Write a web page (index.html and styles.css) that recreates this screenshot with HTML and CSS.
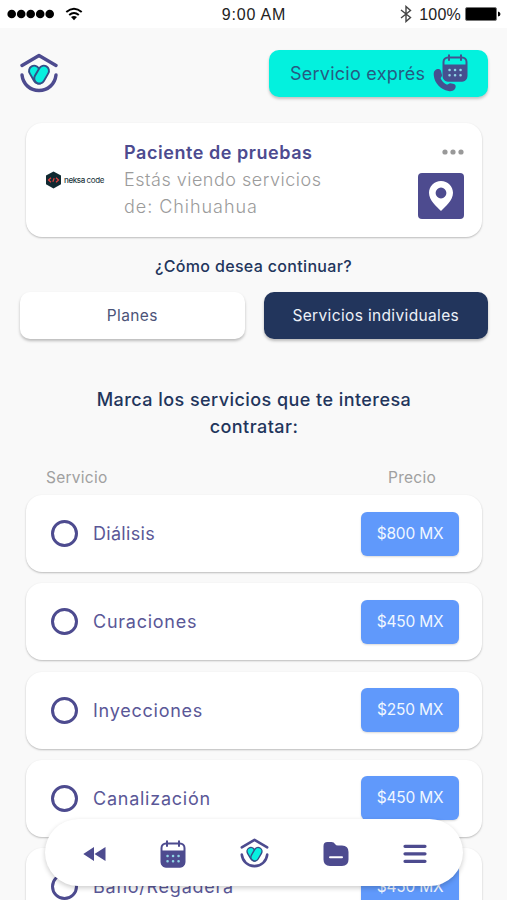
FILE: index.html
```html
<!DOCTYPE html>
<html lang="es">
<head>
    <meta charset="UTF-8">
    <meta name="viewport" content="width=device-width, initial-scale=1.0">
    <title>Servicios individuales</title>
    <link rel="stylesheet" href="styles.css">
</head>
<body>
    <!-- Iconos reutilizables -->
    <svg class="sprite" width="0" height="0">
        <symbol id="logo" viewBox="0 0 38 40">
            <path d="M2 12.5 L19 2.5 L36 12.5" fill="none" stroke="#4d4b8f" stroke-width="3.4" stroke-linecap="round" stroke-linejoin="round"/>
            <path d="M2 22 C3 31 10 37.5 19 37.5 S35 31 36 22" fill="none" stroke="#4d4b8f" stroke-width="3.4" stroke-linecap="round"/>
            <!-- Corazón formado por dos cápsulas -->
            <g fill="none" stroke-linecap="round">
                <path d="M14.2 17.8 L18.6 25.4" stroke="#354f87" stroke-width="12.2"/>
                <path d="M14.2 17.8 L18.6 25.4" stroke="#08efdf" stroke-width="8.4"/>
                <path d="M23.8 17.8 L19.4 25.4" stroke="#354f87" stroke-width="12.2"/>
                <path d="M23.8 17.8 L19.4 25.4" stroke="#08efdf" stroke-width="8.4"/>
            </g>
        </symbol>
        <symbol id="calendar" viewBox="0 0 26 28">
            <path d="M7 1.2 V6 M19 1.2 V6" stroke="currentColor" stroke-width="2" stroke-linecap="round"/>
            <rect x="1.5" y="3.5" width="23" height="23" rx="4.5" fill="none" stroke="currentColor" stroke-width="2"/>
            <path d="M1 10.5 H25 V22 A5 5 0 0 1 20 27.4 H6 A5 5 0 0 1 1 22 Z" fill="currentColor"/>
            <path class="calendar-days" d="M7.5 16 h.1 M13 16 h.1 M18.5 16 h.1 M7.5 21.2 h.1 M13 21.2 h.1 M18.5 21.2 h.1" stroke-width="2.5" stroke-linecap="round"/>
        </symbol>
    </svg>

    <div class="status-bar">
        <div class="status-left">
            <svg width="48" height="10" viewBox="0 0 48 10"><circle cx="4.7" cy="5" r="4.3"/><circle cx="14.2" cy="5" r="4.3"/><circle cx="23.7" cy="5" r="4.3"/><circle cx="33.2" cy="5" r="4.3"/><circle cx="42.7" cy="5" r="4.3"/></svg>
            <svg width="18" height="14" viewBox="0 0 18 14" fill="none" stroke="#000" stroke-width="2">
                <path d="M1.3 5 Q9 -1.6 16.7 5"/>
                <path d="M4.2 8 Q9 4 13.8 8"/>
                <path d="M6 10 Q9 7.9 12 10 L9 13.2 Z" fill="#000" stroke="none"/>
            </svg>
        </div>
        <span class="status-time">9:00 AM</span>
        <div class="status-right">
            <svg width="12" height="18" viewBox="0 0 12 18" fill="none" stroke="#444" stroke-width="1.4"><path d="M1 5 L10.5 12.5 L6 16.5 V1.5 L10.5 5.5 L1 13"/></svg>
            <span class="battery-text">100%</span>
            <svg width="36" height="14" viewBox="0 0 36 14"><rect x=".5" y=".5" width="31" height="13" rx="1.5" fill="#000" stroke="#777"/><path d="M33 4.5 Q35.5 5 35.5 7 T33 9.5 Z"/></svg>
        </div>
    </div>

    <header class="header">
        <svg class="header-logo"><use href="#logo"/></svg>
        <button class="express-btn">
            <span class="express-text">Servicio exprés</span>
            <svg class="express-icon" viewBox="0 0 35 38">
                <path d="M2 16.5 C4 14.5 7 14.5 8 17 L9 21 C9.2 23 7.2 23.4 8 25 C9.2 27.5 11.2 29.6 13.5 30.5 C15 31 15.6 29 17.5 29.2 L21 30 C23.4 31 23 34 21.5 35.5 C20 37 18 37.5 15.5 37 C7.5 35.5 1.5 29 .8 21.5 C.6 19 .8 17.5 2 16.5 Z" fill="#46508f"/>
                <svg x="9" y="0" width="26" height="28"><use href="#calendar"/></svg>
            </svg>
        </button>
    </header>

    <section class="patient-card">
        <div class="brand">
            <svg width="17" height="18" viewBox="0 0 17 18"><path d="M8.5 .5 L16 4.6 V13.2 L8.5 17.5 L1 13.2 V4.6 Z" fill="#102931"/><path d="M6 6.8 L3.5 9 L6 11.2 M11 6.8 L13.5 9 L11 11.2 M9.2 7.2 L7.8 10.8" fill="none" stroke="#e2403f" stroke-width="1.2"/></svg>
            <span class="brand-name">neksa <span class="brand-light">code</span></span>
        </div>
        <div class="patient-info">
            <div class="patient-name">Paciente de pruebas</div>
            <div class="patient-line">Estás viendo servicios</div>
            <div class="patient-line patient-city">de: Chihuahua</div>
        </div>
        <div class="patient-actions">
            <svg width="22" height="6" viewBox="0 0 22 6" fill="#999"><circle cx="3" cy="3" r="2.6"/><circle cx="11" cy="3" r="2.6"/><circle cx="19" cy="3" r="2.6"/></svg>
            <button class="location-btn">
                <svg width="26" height="32" viewBox="0 0 26 32"><path fill="#fff" fill-rule="evenodd" d="M13 1 C6.2 1 1 6.2 1 12.8 C1 20.5 8.5 26.5 13 31 C17.5 26.5 25 20.5 25 12.8 C25 6.2 19.8 1 13 1 Z M13 7.6 A5.4 5.4 0 1 1 13 18.4 A5.4 5.4 0 0 1 13 7.6 Z"/></svg>
            </button>
        </div>
    </section>

    <h2 class="question">¿Cómo desea continuar?</h2>
    <div class="tabs">
        <button class="tab">Planes</button>
        <button class="tab tab-active">Servicios individuales</button>
    </div>

    <h1 class="title">Marca los servicios que te interesa<br>contratar:</h1>

    <div class="list-header">
        <span>Servicio</span>
        <span>Precio</span>
    </div>
    <ul class="services">
        <li class="service"><span class="radio"></span><span class="service-name name-tight">Diálisis</span><span class="price">$800 MX</span></li>
        <li class="service"><span class="radio"></span><span class="service-name">Curaciones</span><span class="price">$450 MX</span></li>
        <li class="service"><span class="radio"></span><span class="service-name">Inyecciones</span><span class="price">$250 MX</span></li>
        <li class="service"><span class="radio"></span><span class="service-name">Canalización</span><span class="price">$450 MX</span></li>
        <li class="service"><span class="radio"></span><span class="service-name">Baño/Regadera</span><span class="price">$450 MX</span></li>
    </ul>

    <nav class="navbar">
        <svg width="23" height="16" viewBox="0 0 23 16" fill="currentColor"><path d="M.3 8 L11 1 V15 Z M11.5 8 L22.5 1 V15 Z"/></svg>
        <svg width="26" height="28"><use href="#calendar"/></svg>
        <svg class="nav-home" width="29" height="30"><use href="#logo"/></svg>
        <svg width="26" height="26" viewBox="0 0 26 26"><path d="M.5 5 Q.5 1 4.5 1 H8.5 Q11 1 12 3 Q13 4.5 15 4.5 H19 Q25.5 4.5 25.5 11 V18.5 Q25.5 25 19 25 H7 Q.5 25 .5 18.5 Z" fill="currentColor"/><path d="M7 16.2 H19" stroke="#fff" stroke-width="2" stroke-linecap="round"/></svg>
        <svg width="24" height="20" viewBox="0 0 24 20"><path d="M2 2.3 H22 M2 9.8 H22 M2 17.3 H22" stroke="currentColor" stroke-width="3.2" stroke-linecap="round"/></svg>
    </nav>
</body>
</html>
```
FILE: styles.css
```css
* {
    box-sizing: border-box;
}

body {
    margin: 0;
    height: 100vh;
    overflow: hidden;
    background-color: #f9f9f9;
    color: #22355c;
    font-family: Inter, "Open Sans", sans-serif;
}

button {
    border: none;
    padding: 0;
    font-family: inherit;
    cursor: pointer;
}

.sprite {
    position: absolute;
}

/* Barra de estado */
.status-bar {
    display: grid;
    grid-template-columns: 1fr auto 1fr;
    align-items: center;
    height: 28px;
    padding: 0 6px 0 7px;
    background-color: #fff;
    color: #222;
    font-family: "Liberation Sans", Arial, sans-serif;
    font-size: 16px;
}

.status-left,
.status-right {
    display: flex;
    align-items: center;
}

.status-left {
    gap: 10px;
}

.status-right {
    justify-content: flex-end;
}

.status-time {
    padding-top: 1px;
    letter-spacing: 0.8px;
}

.battery-text {
    margin: 1px 4px 0 7px;
    letter-spacing: 0.2px;
}

/* Encabezado */
.header {
    display: flex;
    justify-content: space-between;
    padding: 22px 19px 0 20px;
}

.header-logo {
    width: 38px;
    height: 40px;
    margin-top: 3px;
}

.express-btn {
    display: flex;
    align-items: center;
    width: 219px;
    height: 47px;
    padding-left: 21px;
    border-radius: 10px;
    background-color: #03f1de;
    color: #265b83;
    box-shadow: 0 2px 3px rgba(0, 0, 0, 0.22);
}

.express-text {
    width: 143px;
    text-align: left;
    font-size: 18px;
    letter-spacing: 0.25px;
    white-space: nowrap;
}

.express-icon {
    width: 35px;
    height: 38px;
    margin-top: -1px;
    color: #46508f;
}

.calendar-days {
    stroke: #8fd5e5;
}

/* Tarjeta del paciente */
.patient-card {
    display: flex;
    height: 114px;
    margin: 25.5px 25px 0 26px;
    padding: 16.5px 18px 0 19px;
    border-radius: 16px;
    background-color: #fff;
    box-shadow: 0 1px 2px rgba(0, 0, 0, 0.25);
}

.brand {
    display: flex;
    align-items: center;
    gap: 2px;
    width: 79px;
    height: 81px;
}

.brand-name {
    color: #20343b;
    font-size: 8px;
    font-weight: 500;
    letter-spacing: -0.4px;
    white-space: nowrap;
}

.brand-light {
    font-weight: 400;
}

.patient-info {
    flex: 1;
    font-size: 18px;
    line-height: 27px;
    white-space: nowrap;
}

.patient-name {
    color: #4d4b8f;
    font-weight: 600;
    letter-spacing: 0.55px;
}

.patient-line {
    color: #9b9b9b;
    font-weight: 300;
    letter-spacing: 0.5px;
}

.patient-city {
    letter-spacing: 0.95px;
}

.patient-actions {
    display: flex;
    flex-direction: column;
    align-items: flex-end;
    padding-top: 9.5px;
}

.location-btn {
    display: flex;
    align-items: center;
    justify-content: center;
    width: 46px;
    height: 46px;
    margin-top: 18px;
    border-radius: 4px;
    background-color: #4d4b8f;
}

/* Selector */
.question {
    margin: 17.5px 0 14px;
    font-size: 16px;
    font-weight: 500;
    line-height: 24px;
    letter-spacing: 0.33px;
    text-align: center;
}

.tabs {
    display: grid;
    grid-template-columns: 1fr 1fr;
    gap: 19px;
    padding: 0 19px 0 20px;
}

.tab {
    height: 47px;
    border-radius: 10px;
    background-color: #fff;
    color: #4b5378;
    font-size: 15.5px;
    letter-spacing: 0.35px;
    box-shadow: 0 2px 3px rgba(0, 0, 0, 0.25);
}

.tab-active {
    background-color: #22355c;
    color: #edf1f8;
}

.title {
    margin: 47px -1px 0 0;
    font-size: 18px;
    font-weight: 500;
    line-height: 27px;
    letter-spacing: 0.44px;
    text-align: center;
}

/* Lista de servicios */
.list-header {
    display: flex;
    justify-content: space-between;
    margin: 26px 71px 5px 46px;
    color: #a0a0a0;
    font-size: 15.5px;
    line-height: 24px;
    letter-spacing: 0.25px;
}

.services {
    display: grid;
    gap: 11.3px;
    margin: 0 25px 0 26px;
    padding: 0;
    list-style: none;
}

.service {
    display: flex;
    align-items: center;
    height: 77px;
    padding: 0 23px 0 25px;
    border-radius: 16px;
    background-color: #fff;
    box-shadow: 0 1px 2px rgba(0, 0, 0, 0.25);
}

.radio {
    width: 27px;
    height: 27px;
    border: 3px solid #4d4b8f;
    border-radius: 50%;
}

.service-name {
    flex: 1;
    margin-left: 15px;
    color: #5a5797;
    font-size: 18px;
    letter-spacing: 0.75px;
}

.name-tight {
    letter-spacing: 0.3px;
}

.price {
    width: 98px;
    height: 44px;
    border-radius: 6px;
    background-color: #6099fb;
    color: #f0f7ff;
    font-size: 15.5px;
    line-height: 44px;
    letter-spacing: -0.2px;
    text-align: center;
    box-shadow: 0 1px 2px rgba(0, 0, 0, 0.15);
}

/* Navegación inferior */
.navbar {
    position: fixed;
    left: 45px;
    bottom: 14px;
    display: flex;
    align-items: center;
    gap: 54px;
    width: 418px;
    height: 67px;
    padding: 2px 0 0 38px;
    border-radius: 34px;
    background-color: #fff;
    color: #4d4b8f;
    box-shadow: 0 2px 5px rgba(0, 0, 0, 0.2);
}

.navbar .calendar-days {
    stroke: #fff;
}

.nav-home {
    margin-top: -2px;
}
```
